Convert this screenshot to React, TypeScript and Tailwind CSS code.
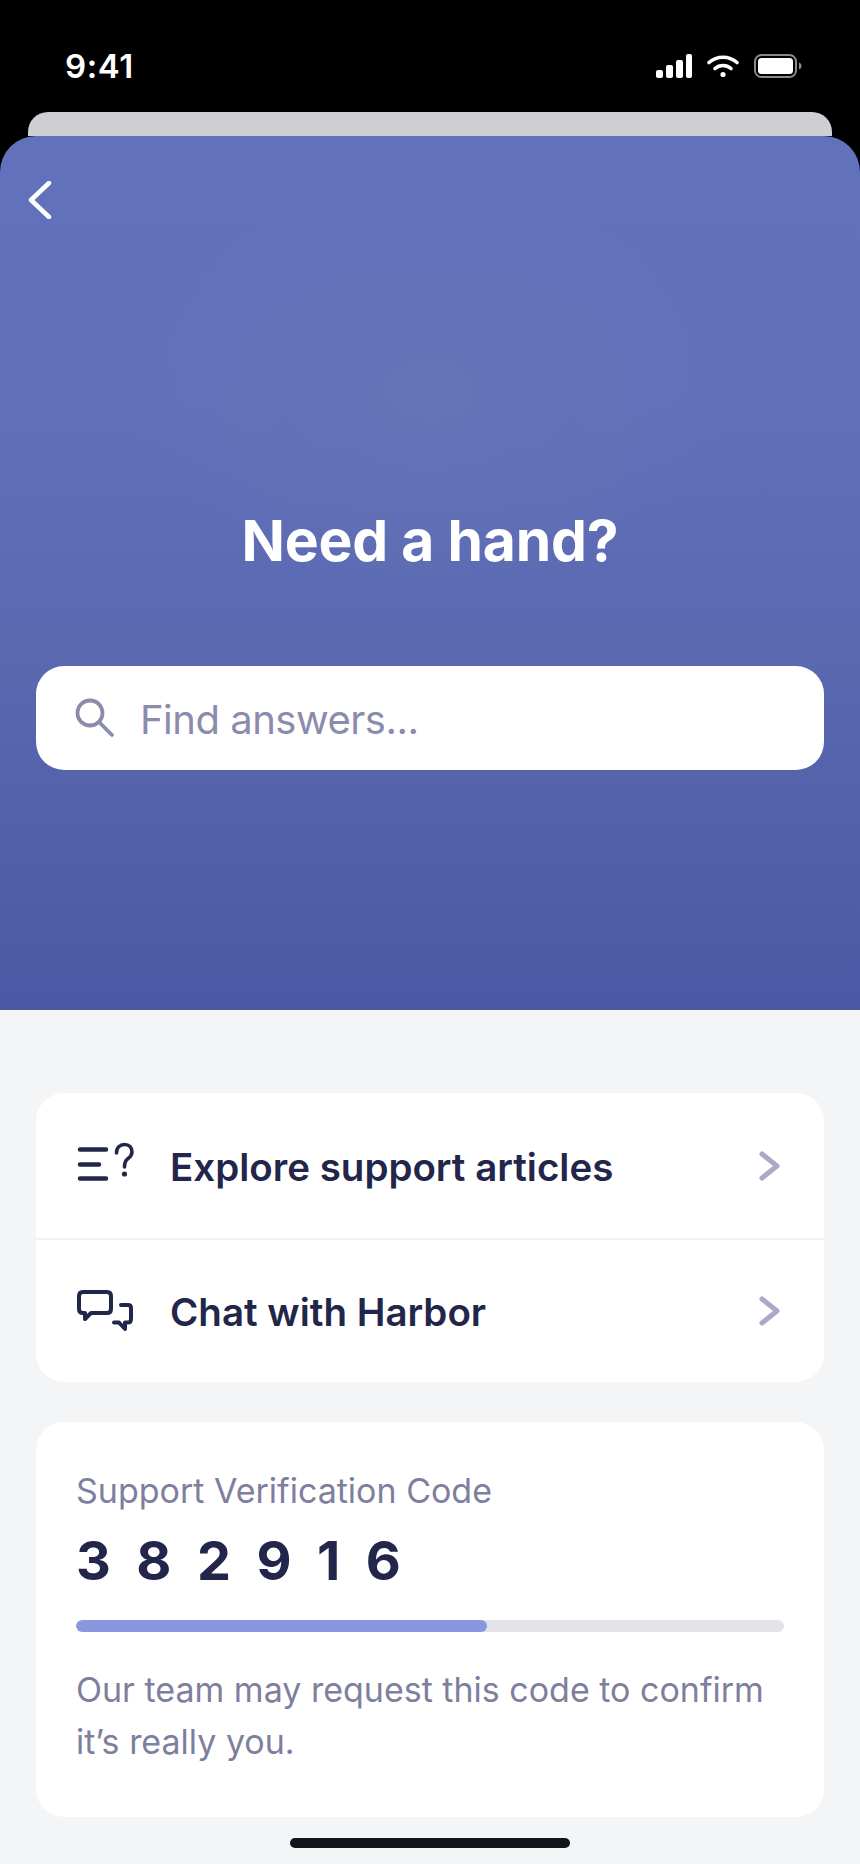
function StatusBar() {
  return (
    <div className="h-[112px] flex items-start justify-between pl-[65px] pr-[58px] pt-[46px] text-white">
      <span className="text-[33px] leading-[40px] font-semibold tracking-[0.6px]">9:41</span>
      <div className="flex items-center gap-[15px] pt-[8px]">
        <svg width="36" height="24" viewBox="0 0 36 24" fill="#fff">
          <rect x="0" y="16" width="7" height="8" rx="2" />
          <rect x="10" y="11" width="7" height="13" rx="2" />
          <rect x="20" y="6" width="7" height="18" rx="2" />
          <rect x="30" y="0" width="6" height="24" rx="2" />
        </svg>
        <svg width="32" height="24" viewBox="0 0 32 24" fill="none" stroke="#fff" strokeWidth="3.6" strokeLinecap="round">
          <path d="M2 8.5C10 1.5 22 1.5 30 8.5" />
          <path d="M8 14.5C12.5 10.5 19.5 10.5 24 14.5" />
          <circle cx="16" cy="20.5" r="2.6" fill="#fff" stroke="none" />
        </svg>
        <svg width="48" height="24" viewBox="0 0 48 24" fill="none">
          <rect x="1" y="1" width="41" height="22" rx="6.5" stroke="#8a8a8a" strokeWidth="2" />
          <rect x="4" y="4" width="35" height="16" rx="3.5" fill="#fff" />
          <path d="M45 8.5C47 9.5 47.5 10.5 47.5 12S47 14.5 45 15.5Z" fill="#8a8a8a" />
        </svg>
      </div>
    </div>
  )
}

function SearchIcon() {
  return (
    <svg width="40" height="40" viewBox="0 0 40 40" fill="none" stroke="#8b8cab" strokeWidth="3.8" strokeLinecap="round">
      <circle cx="15" cy="15" r="12.5" />
      <path d="M24.5 24.5L37 37" />
    </svg>
  )
}

function ChevronRight() {
  return (
    <svg width="21" height="30" viewBox="0 0 21 30" fill="none" stroke="#a9a9c9" strokeWidth="5" strokeLinecap="round" strokeLinejoin="round">
      <path d="M3 3L18 15L3 27" />
    </svg>
  )
}

function ArticlesIcon() {
  return (
    <svg width="58" height="48" viewBox="0 0 58 48" fill="none" stroke="#22264a" strokeLinecap="round">
      <path d="M4 7.5H30M4 22.5H23M4 36.5H30" strokeWidth="4.5" />
      <path d="M40.5 11C40.5 5.5 44 2.5 48.5 2.5C53 2.5 56 5.5 56 10C56 14 53.5 15.5 51.5 17C49.5 18.5 48.5 20 48.5 25" strokeWidth="3.6" />
      <circle cx="48.5" cy="32" r="2.6" fill="#22264a" stroke="none" />
    </svg>
  )
}

function ChatIcon() {
  return (
    <svg width="58" height="48" viewBox="0 0 58 48" fill="none" stroke="#22264a" strokeWidth="4" strokeLinecap="round" strokeLinejoin="round">
      <path d="M7 5H31C33.5 5 35 6.5 35 9V22C35 24.5 33.5 26 31 26H15L9 32V26H7C4.5 26 3 24.5 3 22V9C3 6.5 4.5 5 7 5Z" />
      <path d="M38 35.5H43L49 42V35.5H52C54 35.5 55 34 55 32V21C55 19 54 18 52 18H45" />
    </svg>
  )
}

function MenuRow({ icon, label, height }: { icon: React.ReactNode; label: string; height: string }) {
  return (
    <div className={`${height} flex items-center pl-[40px] pr-[44px]`}>
      <div className="w-[94px] shrink-0 flex items-center">{icon}</div>
      <span className="flex-1 pt-[2px] text-[38.5px] leading-[46px] font-semibold text-[#22264a]">{label}</span>
      <ChevronRight />
    </div>
  )
}

export default function App() {
  return (
    <div className='w-[860px] h-[1864px] overflow-hidden bg-[#f4f5f7] font-["Inter",sans-serif]'>
      <div className="bg-black">
        <StatusBar />
        <div className="h-[24px] mx-[28px] bg-[#cfced3] rounded-t-[20px]" />

        <div className="h-[874px] rounded-t-[36px] px-[36px] bg-[radial-gradient(ellipse_300px_200px_at_50%_29%,#6574b6,#6574b600),linear-gradient(180deg,#6271bc_0%,#6170ba_30%,#5a68b0_60%,#4b58a5_100%)]">
          <div className="pt-[45px]">
            <svg className="-ml-[8px]" width="24" height="38" viewBox="0 0 24 38" fill="none" stroke="#fff" strokeWidth="4.5" strokeLinecap="round" strokeLinejoin="round">
              <path d="M21 2L3 19L21 36" />
            </svg>
          </div>
          <h1 className="mt-[288px] text-center text-[57px] leading-[68px] font-bold tracking-[-0.2px] text-white">Need a hand?</h1>
          <div className="mt-[91px] h-[104px] rounded-[28px] bg-white flex items-center pl-[39px] gap-[25px]">
            <SearchIcon />
            <span className="pt-[3px] text-[40px] leading-[48px] tracking-[-0.5px] text-[#8b8cab]">Find answers...</span>
          </div>
        </div>
      </div>

      <div className="px-[36px] pt-[83px] flex flex-col gap-[40px]">
        <div className="rounded-[28px] bg-white">
          <MenuRow height="h-[145px]" icon={<ArticlesIcon />} label="Explore support articles" />
          <div className="h-[2px] bg-[#f1f2f5]" />
          <MenuRow height="h-[142px]" icon={<ChatIcon />} label="Chat with Harbor" />
        </div>

        <div className="h-[395px] rounded-[28px] bg-white px-[40px] pt-[47px]">
          <div className="text-[34px] leading-[44px] text-[#7e7f9e]">Support Verification Code</div>
          <div className="mt-[18px] text-[54px] leading-[60px] font-bold text-[#22264a] tracking-[25.5px]">382916</div>
          <div className="mt-[29px] h-[12px] rounded-full bg-[#e2e4ea] overflow-hidden">
            <div className="h-full w-[58%] rounded-full bg-[#8a97e0]" />
          </div>
          <p className="mt-[32px] text-[34px] leading-[52px] text-[#7e7f9e]">
            Our team may request this code to confirm it’s really you.
          </p>
        </div>
      </div>

      <div className="mt-[21px] mx-auto w-[280px] h-[10px] rounded-full bg-[#14141c]" />
    </div>
  )
}
